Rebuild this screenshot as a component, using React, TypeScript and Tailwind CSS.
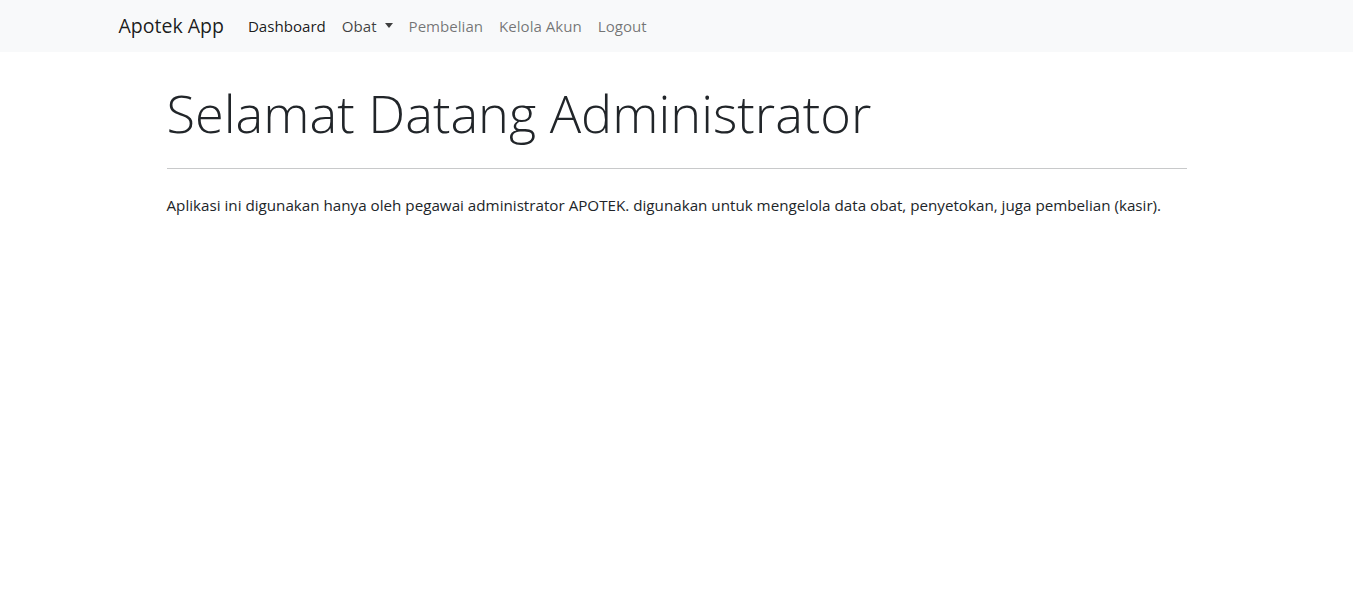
import React from 'react'

const font = { fontFamily: '"Open Sans", "Noto Sans", sans-serif' }

export default function App() {
  return (
    <div className="min-h-screen bg-white text-[#212529]" style={font}>
      {/* Navbar */}
      <nav className="bg-[#f8f9fa]">
        <div className="mx-auto flex h-[52px] max-w-[1140px] items-center px-3">
          <a href="#" className="mr-4 text-[19.5px] text-black/90">
            Apotek App
          </a>
          <ul className="flex items-center text-[15.1px]">
            <li>
              <a href="#" className="px-2 text-black/90">Dashboard</a>
            </li>
            <li>
              <a href="#" className="flex items-center px-2 text-black/75">
                Obat
                <span className="ml-[8px] inline-block h-0 w-0 border-x-[4.5px] border-t-[5px] border-x-transparent border-t-black/75" />
              </a>
            </li>
            <li>
              <a href="#" className="px-2 text-black/55">Pembelian</a>
            </li>
            <li>
              <a href="#" className="px-2 text-black/55">Kelola Akun</a>
            </li>
            <li>
              <a href="#" className="px-2 text-black/55">Logout</a>
            </li>
          </ul>
        </div>
      </nav>

      {/* Jumbotron */}
      <div className="mx-auto max-w-[1140px] px-3">
        <div className="px-12 pt-[27px]">
          <h1 className="text-[52.3px] font-light leading-[67px]">Selamat Datang Administrator</h1>
          <hr className="mt-[22px] mb-6 border-t border-[#c8c9ca]" />
          <p className="text-[15.2px] leading-6">
            Aplikasi ini digunakan hanya oleh pegawai administrator APOTEK. digunakan untuk mengelola data obat, penyetokan, juga pembelian (kasir).
          </p>
        </div>
      </div>
    </div>
  )
}
